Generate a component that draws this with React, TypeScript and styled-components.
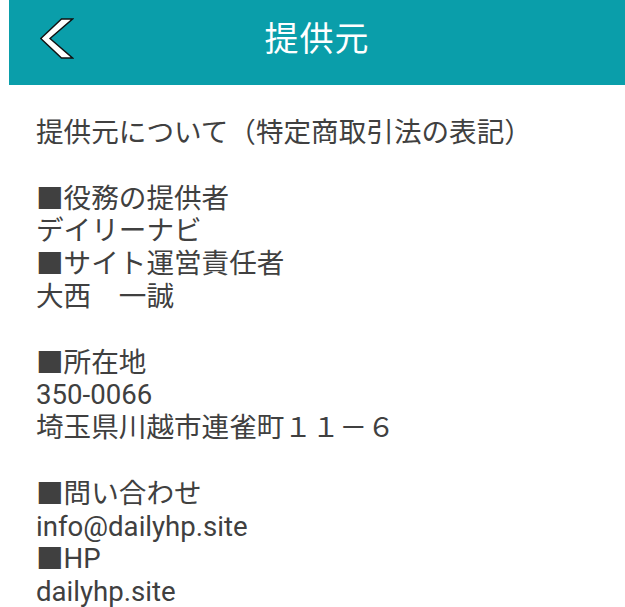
import React from "react";
import styled, { createGlobalStyle } from "styled-components";

const Global = createGlobalStyle`
  html, body { margin: 0; padding: 0; background: #fff; }
  body { font-family: Roboto, "Noto Sans CJK JP", sans-serif; overflow: hidden; }
`;

const Page = styled.div`
  padding-left: 9px;
  width: 616px;
`;

const Header = styled.header`
  height: 85px;
  background: #0a9eaa;
  display: grid;
  grid-template-columns: 1fr auto 1fr;
  align-items: center;
`;

const BackButton = styled.button`
  justify-self: start;
  margin: 0 0 8px 31px;
  padding: 0;
  border: 0;
  background: none;
  display: flex;
  cursor: pointer;
`;

const Title = styled.h1`
  margin: 0 0 10px;
  font-family: "Noto Sans CJK JP", sans-serif;
  font-weight: 400;
  font-size: 34px;
  line-height: 1.2;
  color: #fff;
  letter-spacing: 1px;
`;

const Body = styled.main`
  padding: 32px 0 0 27px;
  color: #404040;
  font-size: 27.6px;
  line-height: 32.8px;
  font-family: Roboto, "Noto Sans CJK JP", sans-serif;
`;

const Line = styled.div`
  height: 32.8px;
  white-space: nowrap;
`;

const lines = [
  "提供元について（特定商取引法の表記）",
  "",
  "■役務の提供者",
  "デイリーナビ",
  "■サイト運営責任者",
  "大西　一誠",
  "",
  "■所在地",
  "350-0066",
  "埼玉県川越市連雀町１１－６",
  "",
  "■問い合わせ",
  "info@dailyhp.site",
  "■HP",
  "dailyhp.site",
];

export default function App() {
  return (
    <>
      <Global />
      <Page>
        <Header>
          <BackButton aria-label="戻る">
            <svg width="34" height="41" viewBox="0 0 34 41">
              <polygon
                points="21.5,1 32.5,1 10,20.5 32.5,40 21.5,40 0.8,20.5"
                fill="#fff"
                stroke="#111"
                strokeWidth="1.4"
                strokeLinejoin="miter"
              />
            </svg>
          </BackButton>
          <Title>提供元</Title>
          <div />
        </Header>
        <Body>
          {lines.map((l, i) => (
            <Line key={i}>{l}</Line>
          ))}
        </Body>
      </Page>
    </>
  );
}
